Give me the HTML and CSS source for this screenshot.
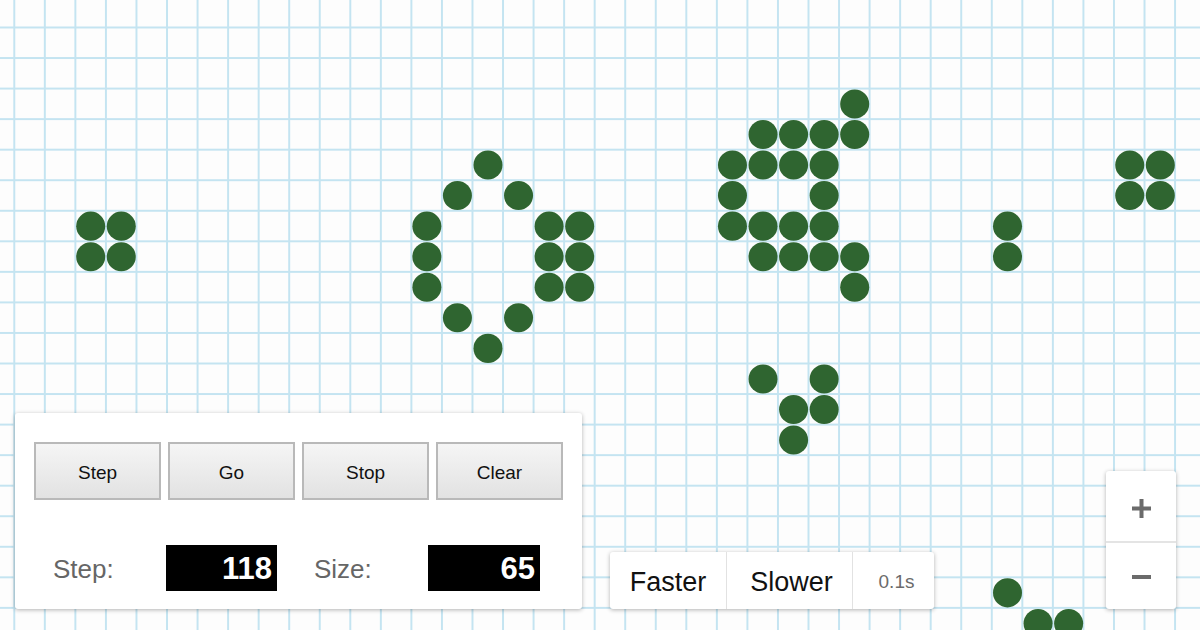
FILE: index.html
```html
<!DOCTYPE html>
<html>
<head>
<meta charset="utf-8">
<title>Life</title>
<link rel="stylesheet" href="styles.css">
</head>
<body>
<div class="board">
  <svg class="cells" width="1200" height="630" viewBox="0 0 1200 630" aria-hidden="true">
    <g transform="translate(14.3 27.5) scale(30.56)" fill="#2f6530">
      <circle cx="2.5" cy="6.5" r="0.475"/><circle cx="3.5" cy="6.5" r="0.475"/>
      <circle cx="2.5" cy="7.5" r="0.475"/><circle cx="3.5" cy="7.5" r="0.475"/>

      <circle cx="15.5" cy="4.5" r="0.475"/>
      <circle cx="14.5" cy="5.5" r="0.475"/><circle cx="16.5" cy="5.5" r="0.475"/>
      <circle cx="13.5" cy="6.5" r="0.475"/><circle cx="17.5" cy="6.5" r="0.475"/><circle cx="18.5" cy="6.5" r="0.475"/>
      <circle cx="13.5" cy="7.5" r="0.475"/><circle cx="17.5" cy="7.5" r="0.475"/><circle cx="18.5" cy="7.5" r="0.475"/>
      <circle cx="13.5" cy="8.5" r="0.475"/><circle cx="17.5" cy="8.5" r="0.475"/><circle cx="18.5" cy="8.5" r="0.475"/>
      <circle cx="14.5" cy="9.5" r="0.475"/><circle cx="16.5" cy="9.5" r="0.475"/>
      <circle cx="15.5" cy="10.5" r="0.475"/>

      <circle cx="27.5" cy="2.5" r="0.475"/>
      <circle cx="24.5" cy="3.5" r="0.475"/><circle cx="25.5" cy="3.5" r="0.475"/><circle cx="26.5" cy="3.5" r="0.475"/><circle cx="27.5" cy="3.5" r="0.475"/>
      <circle cx="23.5" cy="4.5" r="0.475"/><circle cx="24.5" cy="4.5" r="0.475"/><circle cx="25.5" cy="4.5" r="0.475"/><circle cx="26.5" cy="4.5" r="0.475"/>
      <circle cx="23.5" cy="5.5" r="0.475"/><circle cx="26.5" cy="5.5" r="0.475"/>
      <circle cx="23.5" cy="6.5" r="0.475"/><circle cx="24.5" cy="6.5" r="0.475"/><circle cx="25.5" cy="6.5" r="0.475"/><circle cx="26.5" cy="6.5" r="0.475"/>
      <circle cx="24.5" cy="7.5" r="0.475"/><circle cx="25.5" cy="7.5" r="0.475"/><circle cx="26.5" cy="7.5" r="0.475"/><circle cx="27.5" cy="7.5" r="0.475"/>
      <circle cx="27.5" cy="8.5" r="0.475"/>

      <circle cx="24.5" cy="11.5" r="0.475"/><circle cx="26.5" cy="11.5" r="0.475"/>
      <circle cx="25.5" cy="12.5" r="0.475"/><circle cx="26.5" cy="12.5" r="0.475"/>
      <circle cx="25.5" cy="13.5" r="0.475"/>

      <circle cx="32.5" cy="6.5" r="0.475"/><circle cx="32.5" cy="7.5" r="0.475"/>

      <circle cx="36.5" cy="4.5" r="0.475"/><circle cx="37.5" cy="4.5" r="0.475"/>
      <circle cx="36.5" cy="5.5" r="0.475"/><circle cx="37.5" cy="5.5" r="0.475"/>

      <circle cx="32.5" cy="18.5" r="0.475"/>
      <circle cx="33.5" cy="19.5" r="0.475"/><circle cx="34.5" cy="19.5" r="0.475"/>
    </g>
  </svg>

  <div class="controls">
    <div class="buttons">
      <button class="btn">Step</button>
      <button class="btn">Go</button>
      <button class="btn">Stop</button>
      <button class="btn">Clear</button>
    </div>
    <div class="stats">
      <div class="stat">
        <span class="stat-label">Step:</span>
        <span class="stat-value">118</span>
      </div>
      <div class="stat">
        <span class="stat-label">Size:</span>
        <span class="stat-value">65</span>
      </div>
    </div>
  </div>

  <div class="speed">
    <div class="speed-cell speed-faster">Faster</div>
    <div class="speed-cell speed-slower">Slower</div>
    <div class="speed-cell speed-rate">0.1s</div>
  </div>

  <div class="zoom">
    <div class="zoom-btn zoom-in">
      <svg width="19" height="19" viewBox="0 0 19 19"><rect x="0" y="7.5" width="19" height="4" fill="#6b6b6b"/><rect x="7.5" y="0" width="4" height="19" fill="#6b6b6b"/></svg>
    </div>
    <div class="zoom-btn zoom-out">
      <svg width="19" height="4" viewBox="0 0 19 4"><rect x="0" y="0" width="19" height="4" fill="#6b6b6b"/></svg>
    </div>
  </div>
</div>
</body>
</html>
```

FILE: styles.css
```css
html, body {
  margin: 0;
  padding: 0;
  width: 1200px;
  height: 630px;
  overflow: hidden;
  font-family: "Liberation Sans", Arial, sans-serif;
}

.board {
  position: relative;
  width: 1200px;
  height: 630px;
  background-color: #fdfdfd;
  background-image:
    linear-gradient(to right, #c4e4f1 0, #c4e4f1 2px, transparent 2px),
    linear-gradient(to bottom, #c4e4f1 0, #c4e4f1 2px, transparent 2px);
  background-size: 30.56px 30.56px;
  background-position: 13.3px 26.5px;
}

.cells {
  position: absolute;
  left: 0;
  top: 0;
}

.controls {
  position: absolute;
  left: 15px;
  bottom: 21px;
  width: 567px;
  height: 196px;
  box-sizing: border-box;
  padding: 29px 19px 0;
  background: #fff;
  border-radius: 3px;
  box-shadow: 0 1px 4px rgba(0, 0, 0, 0.3);
  display: flex;
  flex-direction: column;
}

.buttons {
  display: grid;
  grid-template-columns: repeat(4, 127px);
  column-gap: 7px;
}

.btn {
  height: 58px;
  box-sizing: border-box;
  border: 2px solid #b9b9b9;
  background: linear-gradient(to bottom, #f5f5f5, #e2e2e2);
  font-family: "Liberation Sans", Arial, sans-serif;
  font-size: 19px;
  color: #111;
  padding: 3px 0 0;
  margin: 0;
}

.stats {
  display: flex;
  gap: 37px;
  margin-top: 45px;
  padding-left: 19px;
}

.stat {
  display: flex;
  align-items: center;
}

.stat-label {
  width: 113px;
  font-size: 26px;
  color: #666;
  padding-top: 2px;
}

.stat-value {
  width: 111px;
  height: 46px;
  box-sizing: border-box;
  padding-right: 5px;
  background: #000;
  color: #fff;
  text-align: right;
  font-family: "Liberation Sans", Arial, sans-serif;
  font-weight: bold;
  font-size: 31px;
  line-height: 48px;
}

.stat + .stat .stat-label {
  width: 114px;
}

.stat + .stat .stat-value {
  width: 112px;
}

.speed {
  position: absolute;
  left: 610px;
  bottom: 21px;
  width: 324px;
  height: 57px;
  background: #fff;
  border-radius: 3px;
  box-shadow: 0 1px 4px rgba(0, 0, 0, 0.3);
  display: flex;
}

.speed-cell {
  display: flex;
  align-items: center;
  justify-content: center;
  color: #111;
  font-size: 27px;
  padding-top: 3px;
}

.speed-faster {
  width: 116px;
  border-right: 1px solid #e2e2e2;
}

.speed-slower {
  width: 126px;
  border-right: 1px solid #e2e2e2;
  padding-left: 4px;
  box-sizing: border-box;
}

.speed-rate {
  flex: 1;
  font-size: 19px;
  color: #6b6b6b;
  padding-left: 6px;
}

.zoom {
  position: absolute;
  left: 1106px;
  bottom: 21px;
  width: 70px;
  height: 138px;
  background: #fff;
  border-radius: 3px;
  box-shadow: 0 1px 4px rgba(0, 0, 0, 0.3);
  display: flex;
  flex-direction: column;
}

.zoom-btn {
  flex: 1;
  display: flex;
  align-items: center;
  justify-content: center;
}

.zoom-in {
  padding-top: 6px;
}

.zoom-out {
  padding-top: 3px;
  border-top: 2px solid #e4e4e4;
}
```
